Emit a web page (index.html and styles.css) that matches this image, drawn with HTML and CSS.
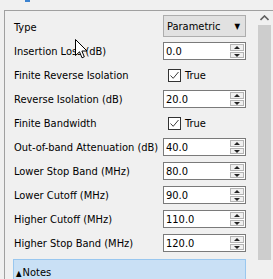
FILE: index.html
```html
<!DOCTYPE html>
<html lang="en">
<head>
  <meta charset="UTF-8" />
  <title>Filter Properties</title>
  <link rel="stylesheet" href="styles.css">
</head>
<body>
  <!-- kousek modrého prvku nad panelem -->
  <div class="top-strip"><span class="blip"></span></div>

  <div class="panel">
    <div class="content">
      <div class="props">
        <label>Type</label>
        <div class="combo"><span>Parametric</span><span class="combo-arrow">▼</span></div>

        <label>Insertion Loss (dB)</label>
        <div class="spin"><span>0.0</span><span class="spin-btns"><i class="up"></i><i class="down"></i></span></div>

        <label>Finite Reverse Isolation</label>
        <div class="check"><span class="box">
          <svg width="11" height="11" viewBox="0 0 11 11"><path d="M1.5 5.5 L4.2 8.3 L9.5 2" fill="none" stroke="#3c3c3c" stroke-width="1"/></svg>
        </span>True</div>

        <label>Reverse Isolation (dB)</label>
        <div class="spin"><span>20.0</span><span class="spin-btns"><i class="up"></i><i class="down"></i></span></div>

        <label>Finite Bandwidth</label>
        <div class="check"><span class="box">
          <svg width="11" height="11" viewBox="0 0 11 11"><path d="M1.5 5.5 L4.2 8.3 L9.5 2" fill="none" stroke="#3c3c3c" stroke-width="1"/></svg>
        </span>True</div>

        <label>Out-of-band Attenuation (dB)</label>
        <div class="spin"><span>40.0</span><span class="spin-btns"><i class="up"></i><i class="down"></i></span></div>

        <label>Lower Stop Band (MHz)</label>
        <div class="spin"><span>80.0</span><span class="spin-btns"><i class="up"></i><i class="down"></i></span></div>

        <label>Lower Cutoff (MHz)</label>
        <div class="spin"><span>90.0</span><span class="spin-btns"><i class="up"></i><i class="down"></i></span></div>

        <label>Higher Cutoff (MHz)</label>
        <div class="spin"><span>110.0</span><span class="spin-btns"><i class="up"></i><i class="down"></i></span></div>

        <label>Higher Stop Band (MHz)</label>
        <div class="spin"><span>120.0</span><span class="spin-btns"><i class="up"></i><i class="down"></i></span></div>
      </div>

      <div class="notes"><span class="notes-arrow">▲</span>Notes</div>
    </div>

    <div class="scrollbar">
      <div class="sb-up">
        <svg width="9" height="6" viewBox="0 0 9 6"><path d="M0.5 5 L4.5 1 L8.5 5" fill="none" stroke="#606060" stroke-width="1.6"/></svg>
      </div>
      <div class="sb-thumb"></div>
    </div>
  </div>

  <!-- kurzor myši -->
  <svg class="cursor" width="13" height="20" viewBox="0 0 13 20">
    <path d="M0.5 0.5 L0.5 16.5 L4.5 12.8 L7 18.8 L9.3 17.8 L6.9 12 L12 12 Z" fill="#fff" stroke="#000" stroke-width="1"/>
  </svg>
</body>
</html>
```

FILE: styles.css
```css
body {
  margin: 0;
  background: #f0f0f0;
  font-family: "DejaVu Sans Condensed", "DejaVu Sans", sans-serif;
  font-stretch: condensed;
  font-size: 11px;
  color: #000;
  height: 279px;
  overflow: hidden;
  position: relative;
}

.top-strip {
  height: 10px;
}
.blip {
  display: block;
  width: 5px;
  height: 2px;
  margin-left: 25px;
  background: #3b82d0;
}

/* === panel s vlastnostmi === */
.panel {
  display: flex;
  margin-left: 4px;
  height: 269px;
  border-top: 1px solid #a0a0a0;
  border-left: 1px solid #a0a0a0;
  box-sizing: border-box;
}
.content {
  flex: 1;
  padding: 4px 10px 0 9px;
}
.props {
  display: grid;
  grid-template-columns: 149px 83px;
  grid-auto-rows: 24px;
  align-items: center;
}
.props label {
  white-space: nowrap;
}

/* combo box */
.combo {
  height: 22px;
  box-sizing: border-box;
  border: 1px solid #adadad;
  background: #e1e1e1;
  display: flex;
  align-items: center;
  justify-content: space-between;
  padding: 0 5px 0 3px;
  margin-top: -2px;
}
.combo-arrow {
  font-size: 8px;
}

/* číselná pole */
.spin {
  height: 18px;
  box-sizing: border-box;
  border: 1px solid #7a7a7a;
  background: #fff;
  display: flex;
  align-items: center;
  justify-content: space-between;
  padding: 0 1px 0 2px;
}
.spin-btns {
  display: flex;
  flex-direction: column;
  width: 14px;
  height: 14px;
  gap: 1px;
}
.spin-btns i {
  flex: 1;
  border: 1px solid #b4b4b4;
  background: #f0f0f0;
  position: relative;
}
.spin-btns i::after {
  content: "";
  position: absolute;
  left: 3px;
  border-left: 3px solid transparent;
  border-right: 3px solid transparent;
}
.spin-btns .up::after {
  top: 1px;
  border-bottom: 3px solid #222;
}
.spin-btns .down::after {
  top: 1px;
  border-top: 3px solid #222;
}

/* zaškrtávací políčka */
.check {
  display: flex;
  align-items: center;
  gap: 4px;
  padding-left: 5px;
}
.box {
  width: 13px;
  height: 13px;
  box-sizing: border-box;
  border: 1px solid #333;
  background: #fff;
  display: flex;
  align-items: center;
  justify-content: center;
}

/* sekce Notes */
.notes {
  margin-top: 4px;
  margin-left: -1px;
  height: 22px;
  box-sizing: border-box;
  border: 1px solid #99c7ef;
  border-bottom: none;
  background: #c9e0f5;
  padding: 6px 0 0 2px;
  line-height: 13px;
}
.notes-arrow {
  font-size: 8px;
  margin-right: 1px;
}

/* posuvník */
.scrollbar {
  width: 17px;
  display: flex;
  flex-direction: column;
  align-items: center;
}
.sb-up {
  height: 14px;
  display: flex;
  align-items: center;
  justify-content: center;
}
.sb-thumb {
  width: 13px;
  height: 235px;
  background: #cdcdcd;
}

.cursor {
  position: absolute;
  left: 75px;
  top: 39px;
}
```
